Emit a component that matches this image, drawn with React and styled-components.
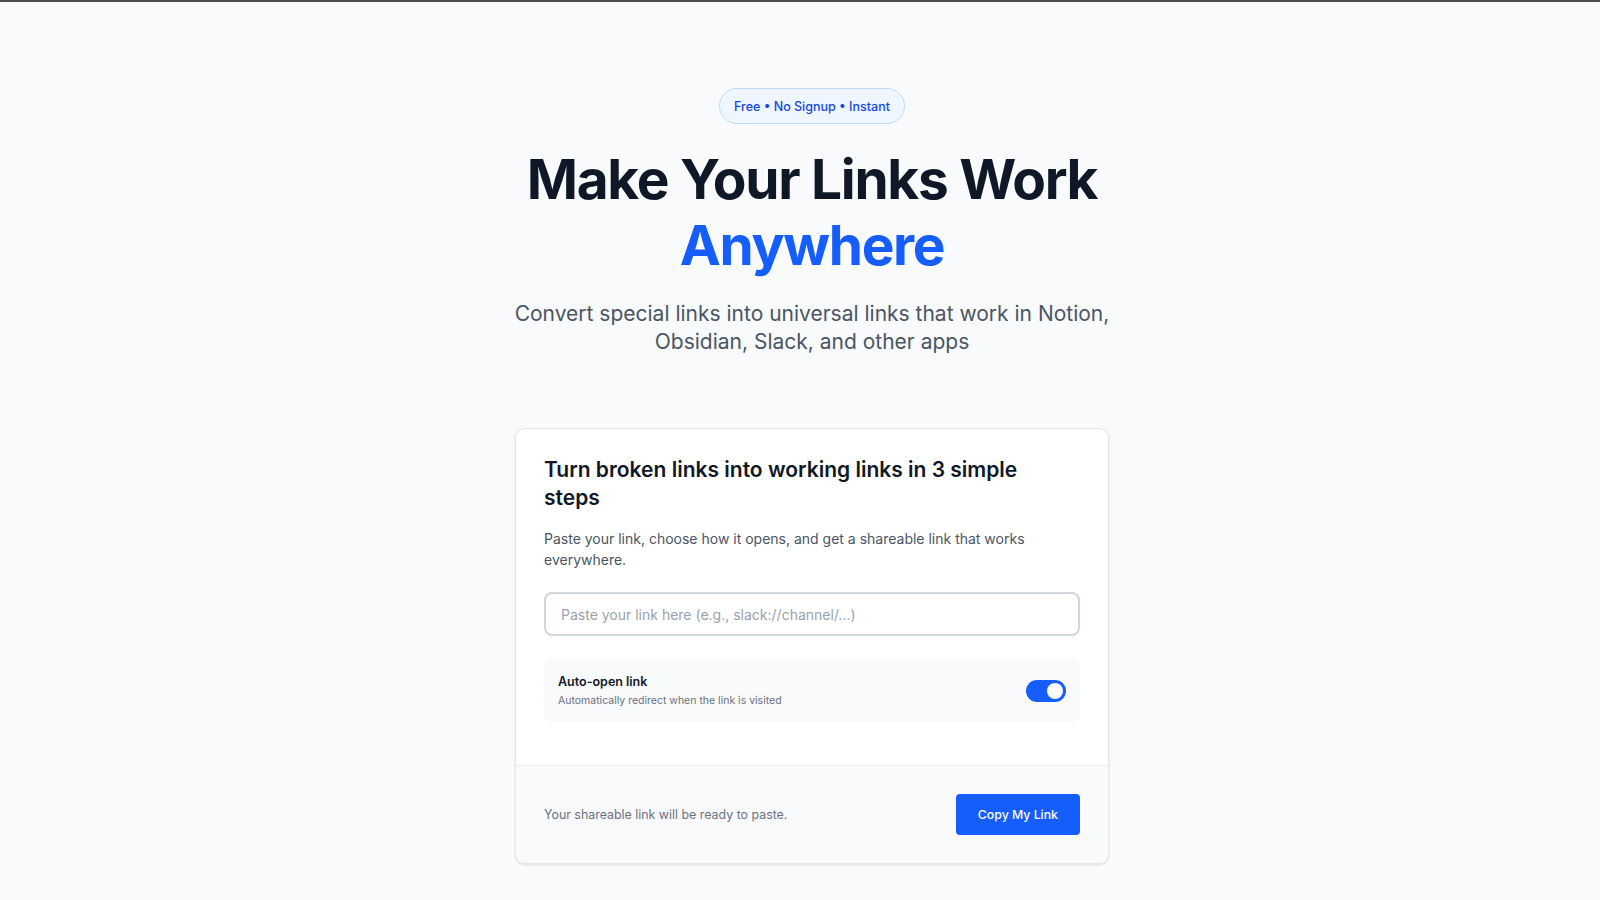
import { useState } from 'react';
import styled, { createGlobalStyle } from 'styled-components';

const GlobalStyle = createGlobalStyle`
  * {
    box-sizing: border-box;
  }
  html,
  body {
    margin: 0;
    padding: 0;
    background: #f9fafb;
    font-family: Inter, 'Noto Sans', sans-serif;
    color: #101828;
  }
`;

const App = () => {
  const [autoOpen, setAutoOpen] = useState(true);
  const [link, setLink] = useState('');

  return (
    <>
      <GlobalStyle />
      <TopBar />
      <Main>
        <Hero>
          <Badge>Free • No Signup • Instant</Badge>
          <Title>
            Make Your Links Work
            <Accent>Anywhere</Accent>
          </Title>
          <Lead>
            Convert special links into universal links that work in Notion, Obsidian, Slack, and other
            apps
          </Lead>
        </Hero>

        <Card>
          <CardBody>
            <CardTitle>Turn broken links into working links in 3 simple steps</CardTitle>
            <CardText>
              Paste your link, choose how it opens, and get a shareable link that works everywhere.
            </CardText>
            <LinkInput
              value={link}
              onChange={(e) => setLink(e.target.value)}
              placeholder="Paste your link here (e.g., slack://channel/...)"
            />
            <OptionRow>
              <OptionText>
                <OptionLabel>Auto-open link</OptionLabel>
                <OptionHint>Automatically redirect when the link is visited</OptionHint>
              </OptionText>
              <Toggle $on={autoOpen} onClick={() => setAutoOpen(!autoOpen)} aria-label="Auto-open link">
                <Knob $on={autoOpen} />
              </Toggle>
            </OptionRow>
          </CardBody>
          <CardFooter>
            <FooterNote>Your shareable link will be ready to paste.</FooterNote>
            <PrimaryButton>Copy My Link</PrimaryButton>
          </CardFooter>
        </Card>
      </Main>
    </>
  );
};

export default App;

const TopBar = styled.div`
  height: 2px;
  background: #4d4d4f;
`;

const Main = styled.main`
  display: flex;
  flex-direction: column;
  align-items: center;
  padding: 86px 0 40px 24px;
`;

const Hero = styled.section`
  display: flex;
  flex-direction: column;
  align-items: center;
  text-align: center;
`;

const Badge = styled.span`
  display: inline-flex;
  align-items: center;
  height: 36px;
  padding: 0 14px;
  border-radius: 999px;
  background: #eff6ff;
  border: 1px solid #bedbff;
  color: #1447e6;
  font-size: 12.5px;
  font-weight: 500;
`;

const Title = styled.h1`
  margin: 22px 0 0;
  font-size: 55px;
  line-height: 66px;
  font-weight: 700;
  letter-spacing: -1.3px;
  color: #101828;
`;

const Accent = styled.span`
  display: block;
  color: #155dfc;
`;

const Lead = styled.p`
  margin: 22px 0 0;
  max-width: 660px;
  font-size: 21px;
  line-height: 28px;
  color: #4a5565;
`;

const Card = styled.div`
  width: 594px;
  margin-top: 72px;
  background: #fff;
  border: 1px solid #e5e7eb;
  border-radius: 10px;
  box-shadow: 0 1px 3px rgba(16, 24, 40, 0.08), 0 1px 2px rgba(16, 24, 40, 0.04);
  overflow: hidden;
`;

const CardBody = styled.div`
  display: flex;
  flex-direction: column;
  padding: 27px 28px 43px;
`;

const CardTitle = styled.h2`
  margin: 0;
  max-width: 500px;
  font-size: 21px;
  line-height: 28px;
  font-weight: 600;
  color: #101828;
`;

const CardText = styled.p`
  margin: 16px 0 0;
  font-size: 14px;
  line-height: 21px;
  color: #4a5565;
`;

const LinkInput = styled.input`
  margin-top: 22px;
  height: 44px;
  padding: 0 15px;
  border: 2px solid #d1d5dc;
  border-radius: 8px;
  font-family: inherit;
  font-size: 14px;
  color: #101828;
  background: #fff;
  outline: none;
  &::placeholder {
    color: #99a1af;
  }
`;

const OptionRow = styled.div`
  display: flex;
  align-items: center;
  justify-content: space-between;
  margin-top: 23px;
  height: 63px;
  padding: 0 14px;
  border-radius: 8px;
  background: #f9fafb;
`;

const OptionText = styled.div`
  display: flex;
  flex-direction: column;
  gap: 2px;
`;

const OptionLabel = styled.span`
  font-size: 12.5px;
  line-height: 18px;
  font-weight: 600;
  color: #101828;
`;

const OptionHint = styled.span`
  font-size: 10.5px;
  line-height: 15px;
  color: #6a7282;
`;

const Toggle = styled.button`
  position: relative;
  width: 40px;
  height: 22px;
  padding: 0;
  border: none;
  border-radius: 999px;
  background: ${(p) => (p.$on ? '#155dfc' : '#d1d5dc')};
  cursor: pointer;
`;

const Knob = styled.span`
  position: absolute;
  top: 3px;
  left: ${(p) => (p.$on ? '21px' : '3px')};
  width: 16px;
  height: 16px;
  border-radius: 50%;
  background: #fff;
`;

const CardFooter = styled.div`
  display: flex;
  align-items: center;
  justify-content: space-between;
  padding: 28px 28px;
  background: #f9fafb;
  border-top: 1px solid #eceef2;
`;

const FooterNote = styled.span`
  font-size: 12.4px;
  color: #6a7282;
`;

const PrimaryButton = styled.button`
  height: 41px;
  padding: 0 22px;
  border: none;
  border-radius: 4px;
  background: #155dfc;
  color: #fff;
  font-family: inherit;
  font-size: 12.3px;
  font-weight: 500;
  cursor: pointer;
`;
